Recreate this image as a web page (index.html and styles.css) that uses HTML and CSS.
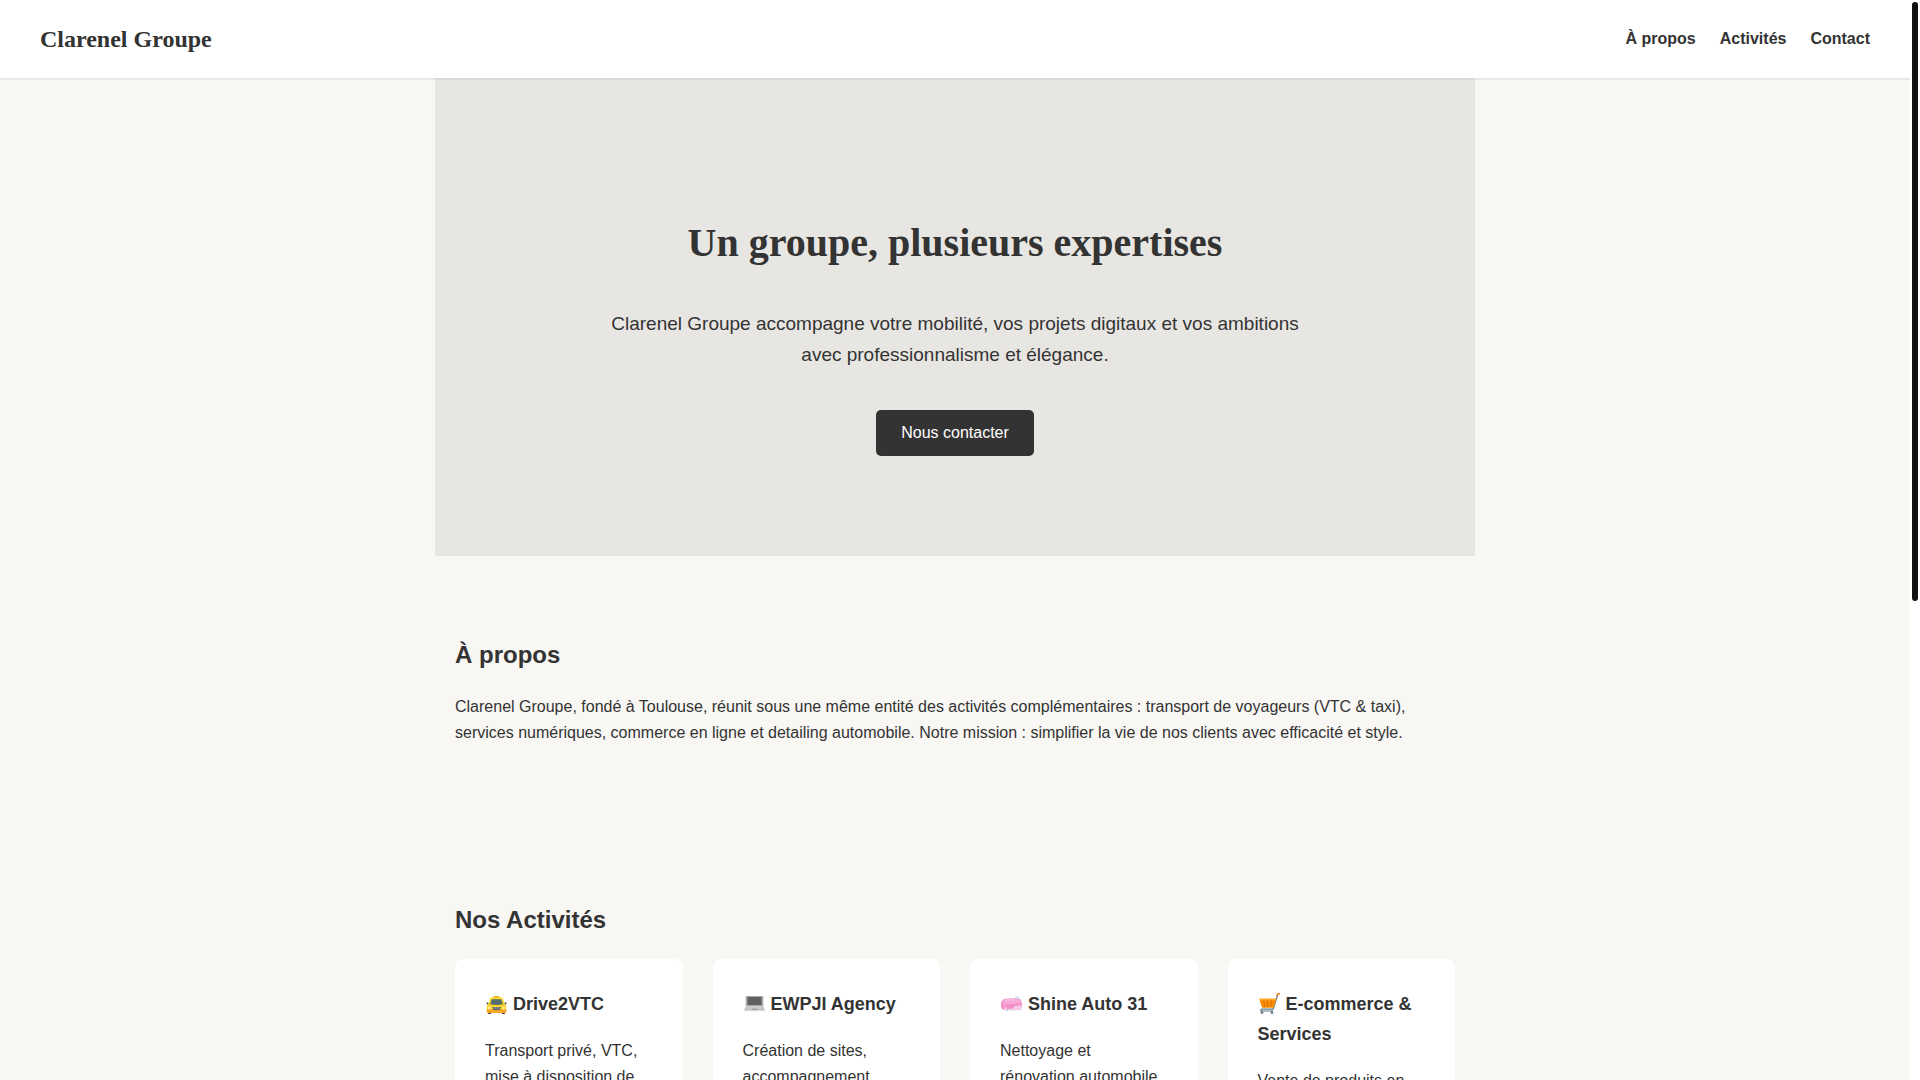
FILE: index.html
```html
<!DOCTYPE html>
<html lang="fr">
  <head>
    <meta charset="UTF-8" />
    <meta name="viewport" content="width=device-width, initial-scale=1.0" />
    <title>Clarenel Groupe</title>
    <link rel="stylesheet" href="styles.css">
  </head>
  <body>
    <header>
      <h1>Clarenel Groupe</h1>
      <nav>
        <a href="#apropos">À propos</a>
        <a href="#activites">Activités</a>
        <a href="#contact">Contact</a>
      </nav>
    </header>

    <section class="hero">
      <h2>Un groupe, plusieurs expertises</h2>
      <p>Clarenel Groupe accompagne votre mobilité, vos projets digitaux et vos ambitions avec professionnalisme et élégance.</p>
      <a href="#contact" class="btn">Nous contacter</a>
    </section>

    <section id="apropos">
      <h2>À propos</h2>
      <p>Clarenel Groupe, fondé à Toulouse, réunit sous une même entité des activités complémentaires : transport de voyageurs (VTC &amp; taxi), services numériques, commerce en ligne et detailing automobile. Notre mission : simplifier la vie de nos clients avec efficacité et style.</p>
    </section>

    <section id="activites">
      <h2>Nos Activités</h2>
      <div class="cards">
        <div class="card">
          <h3>
            <svg class="icon" viewBox="0 0 23 23" aria-hidden="true">
              <path d="M8.5 6.5V4.8Q8.5 4 9.3 4h4.4q.8 0 .8.8v1.7z" fill="#d9b520"/>
              <path d="M3 19v2.2q0 .8.8.8h1.6q.8 0 .8-.8V19zM16.8 19v2.2q0 .8.8.8h1.6q.8 0 .8-.8V19z" fill="#4a3a2c"/>
              <path d="M1 10.8q2-.8 3 1.2l-1.2.8zM22 10.8q-2-.8-3 1.2l1.2.8z" fill="#3d3d3d"/>
              <path d="M6.8 5.6h9.4q1.2 0 1.7 1.2l1.9 5.4q1.4 1.2 1.4 3v4.6q0 1-1 1H2.8q-1 0-1-1v-4.6q0-1.8 1.4-3l1.9-5.4q.5-1.2 1.7-1.2z" fill="#fdd32b"/>
              <path d="M1.8 17.5h19.4v2.3q0 1-1 1H2.8q-1 0-1-1z" fill="#f6a224"/>
              <path d="M7.4 7.3h8.2q.7 0 .9.7l1.4 4.2q-6.4 1.4-12.8 0L6.500 8q.2-.7.9-.7z" fill="#546e6f"/>
              <path d="M7 15h9l-1.300 3H8.300z" fill="#596568"/>
              <path d="M8 16h7" stroke="#c2c7b2" stroke-width=".6"/>
              <circle cx="4.300" cy="16" r="1.300" fill="#fff3ad"/>
              <circle cx="18.700" cy="16" r="1.300" fill="#fff3ad"/>
            </svg>
            Drive2VTC
          </h3>
          <p>Transport privé, VTC, mise à disposition de</p>
        </div>
        <div class="card">
          <h3>
            <svg class="icon" viewBox="0 0 23 23" aria-hidden="true">
              <rect x="2.700" y="4" width="17.600" height="10.300" rx=".8" fill="#a9a9a9"/>
              <rect x="4.500" y="5" width="14" height="8" fill="#606060"/>
              <path d="M3 14.300h17l2 3.700H1z" fill="#bdbdbd"/>
              <path d="M4 15.300h15M3.500 16.300h16" stroke="#e8e8e8" stroke-width=".6" stroke-dasharray="1 .5"/>
              <path d="M9 16.700h5l.4 1.300H8.600z" fill="#999"/>
              <path d="M1 18h21v.5q0 .7-.7.7H1.700q-.7 0-.7-.7z" fill="#dedede"/>
            </svg>
            EWPJI Agency
          </h3>
          <p>Création de sites, accompagnement</p>
        </div>
        <div class="card">
          <h3>
            <svg class="icon" viewBox="0 0 23 23" aria-hidden="true">
              <g fill="#d6ecf8">
                <circle cx="17" cy="6.600" r="2.500"/>
                <circle cx="20" cy="8" r="1.600"/>
                <circle cx="7" cy="18" r="1.500"/>
                <circle cx="20.500" cy="17" r="1.500"/>
              </g>
              <path d="M5 6.700q7-.9 13 0 3.600.7 3.900 5 .2 5-1.900 5.900-8 1.100-17.300 0Q.8 16.500 1 12.500q.4-5 4-5.800z" fill="#f48fc8"/>
              <path d="M5 7.400q7-.9 13 0 2.300.5 3 2.700-4 2.400-9.500 2-6 .4-9.300-1.500Q3 8 5 7.400z" fill="#f9aad7"/>
              <path d="M5 8.300q5-.8 10-.3" stroke="#fcc7e5" fill="none"/>
              <g fill="#f5cfe7">
                <circle cx="16" cy="15.800" r="2"/>
                <circle cx="19.500" cy="15.500" r="2.300"/>
                <circle cx="12.700" cy="17.300" r="1.200"/>
                <circle cx="4.500" cy="13" r=".8"/>
                <circle cx="5.800" cy="16.500" r="1.500"/>
              </g>
              <g fill="#e2f3fb">
                <circle cx="9.500" cy="18" r="1.200"/>
                <circle cx="14.500" cy="18.200" r=".9"/>
              </g>
            </svg>
            Shine Auto 31
          </h3>
          <p>Nettoyage et rénovation automobile</p>
        </div>
        <div class="card">
          <h3>
            <svg class="icon" viewBox="0 0 23 23" aria-hidden="true">
              <path d="M19.800 2.500l-4.600 14.700H3.500q-1.700 1.800.2 1.800H15" fill="none" stroke="#607d8b" stroke-width="1.200"/>
              <path d="M1.300 6.700h17l-2.500 9H4z" fill="#fb8c00"/>
              <path d="M1.300 6.700h17l-.4 1.500H1.800z" fill="#ffa726"/>
              <path d="M5.800 8.500l1 6.500M9.600 8.500V15M13.500 8.500l-.7 6.500" stroke="#c96f12" stroke-width=".9"/>
              <path d="M22 1.700h-1.700q-.8 0-1 .8l-.6 2" fill="none" stroke="#ef7d2d" stroke-width="1.500"/>
              <circle cx="4" cy="20.500" r="1.400" fill="#546e7a"/>
              <circle cx="14" cy="20.500" r="1.400" fill="#546e7a"/>
              <circle cx="4" cy="20.500" r=".5" fill="#cfd8dc"/>
              <circle cx="14" cy="20.500" r=".5" fill="#cfd8dc"/>
            </svg>
            E-commerce &amp; Services
          </h3>
          <p>Vente de produits en</p>
        </div>
      </div>
    </section>

    <section id="contact"></section>

    <div class="scrollbar" aria-hidden="true">
      <div class="scrollbar-thumb"></div>
    </div>
  </body>
</html>
```
FILE: styles.css
```css
body {
  font-family: "Liberation Sans", Arial, sans-serif;
  font-size: 16px;
  line-height: 26px;
  margin: 0;
  padding-right: 10px;
  background: #f8f7f3;
  color: #333;
  scrollbar-width: none;
}

header {
  position: sticky;
  top: 0;
  z-index: 10;
  display: flex;
  justify-content: space-between;
  align-items: center;
  padding: 20px 40px;
  background: #fff;
  box-shadow: 0 2px 0 rgba(0, 0, 0, 0.06);
}
header h1 {
  margin: 0;
  font-family: "Liberation Serif", serif;
  font-size: 24px;
  line-height: 38px;
}
nav {
  display: flex;
  gap: 24px;
}
nav a {
  color: #333;
  font-weight: bold;
  text-decoration: none;
}

section {
  max-width: 1000px;
  margin: 0 auto;
  padding: 60px 20px;
}
section h2 {
  margin: 20px 0;
  font-size: 24px;
  line-height: 38px;
}
section p {
  margin: 15px 0;
}

.hero {
  padding: 100px 20px;
  background: #e8e6e2;
  text-align: center;
}
.hero h2 {
  margin: 33px 0;
  font-family: "Liberation Serif", serif;
  font-size: 40px;
  line-height: 64px;
}
.hero p {
  max-width: 700px;
  margin: 0 auto 40px;
  font-size: 19px;
  line-height: 31px;
}
.btn {
  display: inline-block;
  padding: 10px 25px;
  border-radius: 5px;
  background: #333;
  color: #fff;
  text-decoration: none;
}

.cards {
  display: grid;
  grid-template-columns: repeat(auto-fit, minmax(220px, 1fr));
  gap: 30px;
}
.card {
  padding: 30px;
  border-radius: 8px;
  background: #fff;
}
.card h3 {
  margin: 0 0 19px;
  font-size: 18px;
  line-height: 30px;
}
.card p {
  margin: 0;
}
.icon {
  width: 23px;
  height: 23px;
  vertical-align: -5px;
}

#contact {
  min-height: 480px;
}

/* custom scrollbar */
.scrollbar {
  position: fixed;
  top: 0;
  right: 0;
  bottom: 0;
  z-index: 20;
  box-sizing: border-box;
  width: 10px;
  padding: 2px;
  background: #fff;
}
.scrollbar-thumb {
  height: 55.7%;
  border-radius: 3px;
  background: #111;
}
```
